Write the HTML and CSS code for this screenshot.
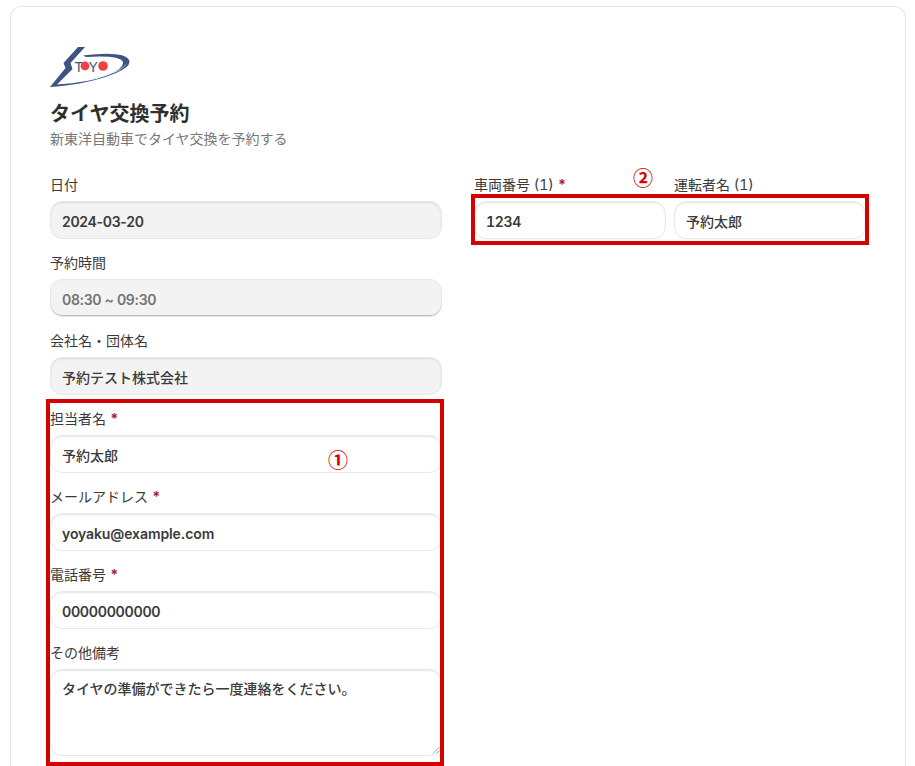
FILE: index.html
```html
<!DOCTYPE html>
<html lang="ja">
<head>
<meta charset="utf-8">
<title>タイヤ交換予約</title>
<link rel="stylesheet" href="styles.css">
</head>
<body>
<main class="card">
  <svg class="logo" viewBox="0 0 80 41" width="80" height="41" aria-label="TOYO">
    <path d="M0 41 L15.5 22 L13.5 17 L28 1 L35 1 L20.5 17 L22.5 23 L7 38.5 Q38 37 58 29 Q74 22 73 16 Q70 9 36 11 L33 9.5 Q74 4.5 79 14 Q82 20 66 27 Q40 38 0 41Z" fill="#3d5480"/>
    <path d="M26 35.5 Q50 33 68 24 Q76 20 77 16 Q76 21 66 26 Q48 34 26 35.5Z" fill="#dfe4ee"/>
    <text x="24.5" y="25.5" class="logo-text">T</text>
    <text x="38.5" y="25.5" class="logo-text">Y</text>
    <circle cx="35" cy="20" r="4.4" fill="#f04040"/>
    <circle cx="53" cy="20" r="4.8" fill="#f04040"/>
  </svg>
  <h1 class="title">タイヤ交換予約</h1>
  <p class="subtitle">新東洋自動車でタイヤ交換を予約する</p>

  <div class="columns">
    <div class="col">
      <div class="field">
        <label class="label">日付</label>
        <div class="input readonly digits">2024-03-20</div>
      </div>
      <div class="field">
        <label class="label">予約時間</label>
        <div class="input disabled digits">08:30 ~ 09:30</div>
      </div>
      <div class="field">
        <label class="label">会社名・団体名</label>
        <div class="input readonly cjk">予約テスト株式会社</div>
      </div>
      <div class="field">
        <label class="label">担当者名 <span class="req">*</span></label>
        <div class="input cjk">予約太郎</div>
      </div>
      <div class="field">
        <label class="label">メールアドレス <span class="req">*</span></label>
        <div class="input">yoyaku@example.com</div>
      </div>
      <div class="field">
        <label class="label">電話番号 <span class="req">*</span></label>
        <div class="input digits">00000000000</div>
      </div>
      <div class="field">
        <label class="label">その他備考</label>
        <div class="input textarea cjk">タイヤの準備ができたら一度連絡をください。
          <svg class="grip" viewBox="0 0 8 8" width="8" height="8"><path d="M1 7.5 L7.5 1 M4.5 7.5 L7.5 4.5" stroke="#888" stroke-width="0.8" fill="none"/></svg>
        </div>
      </div>
    </div>
    <div class="col">
      <div class="pair">
        <div class="field">
          <label class="label">車両番号 (1) <span class="req">*</span></label>
          <div class="input digits tnum">1234</div>
        </div>
        <div class="field">
          <label class="label">運転者名 (1)</label>
          <div class="input cjk">予約太郎</div>
        </div>
      </div>
    </div>
  </div>
</main>
<div class="mark mark-one"></div>
<div class="mark mark-two"></div>
<span class="num num-one">①</span>
<span class="num num-two">②</span>
</body>
</html>
```
FILE: styles.css
```css
* { box-sizing: border-box; }
html, body { height: 766px; overflow: hidden; }
body {
  margin: 0;
  background: #fff;
  color: #333;
  font-family: Inter, "Noto Sans CJK JP", sans-serif;
  position: relative;
}
.card {
  margin: 6px 9px 0 10px;
  height: 760px;
  padding: 39px 39px 0;
  border: 1px solid #e5e5e5;
  border-bottom: 0;
  border-radius: 12px 12px 0 0;
  background: #fff;
  overflow: hidden;
}
.logo { display: block; }
.logo-text { font: 14px "Liberation Sans", sans-serif; fill: #3d5480; }
.title {
  margin: 13px 0 0;
  font-size: 20px;
  line-height: 28px;
  font-weight: 700;
  color: #2f2f2f;
}
.subtitle {
  margin: 1px 0 0;
  font-size: 14px;
  line-height: 20px;
  color: #777;
}
.columns {
  display: grid;
  grid-template-columns: 392px 392px;
  gap: 32px;
  margin-top: 26px;
}
.col { display: flex; flex-direction: column; gap: 14px; }
.pair { display: grid; grid-template-columns: 192px 192px; gap: 8px; }
.label {
  display: block;
  height: 20px;
  margin-bottom: 6px;
  font-size: 14px;
  line-height: 20px;
  font-variant-numeric: tabular-nums;
  color: #3a3a3a;
  white-space: nowrap;
}
.req { color: #a8281c; font-weight: 700; }
.input {
  position: relative;
  height: 38px;
  padding: 2px 11px 0;
  border: 1px solid #e8e8e8;
  border-radius: 12px;
  box-shadow: inset 0 1px 2px rgba(0, 0, 0, 0.1);
  background: #fff;
  font-size: 14px;
  line-height: 36px;
  font-weight: 600;
  letter-spacing: -0.1px;
  color: #3a3a3a;
}
.digits { letter-spacing: -0.3px; }
.tnum { font-variant-numeric: tabular-nums; }
.cjk { font-weight: 500; letter-spacing: 0; }
.readonly { background: #f3f3f3; }
.disabled {
  background: #f3f3f3;
  color: #737373;
  box-shadow: inset 0 -1px 0 #bbb;
}
.textarea {
  height: 87px;
  padding-top: 0;
  line-height: 38px;
  white-space: normal;
}
.grip { position: absolute; right: 1px; bottom: 1px; }
.mark { position: absolute; border: 4px solid #d60000; pointer-events: none; }
.mark-one { left: 46px; top: 399px; width: 398px; height: 367px; }
.mark-two { left: 471px; top: 194px; width: 398px; height: 51px; }
.num {
  position: absolute;
  color: #d60000;
  font-family: "Noto Sans CJK JP", sans-serif;
  font-size: 20px;
  line-height: 24px;
  font-weight: 700;
}
.num-one { left: 328px; top: 448px; }
.num-two { left: 633px; top: 166px; }
```
